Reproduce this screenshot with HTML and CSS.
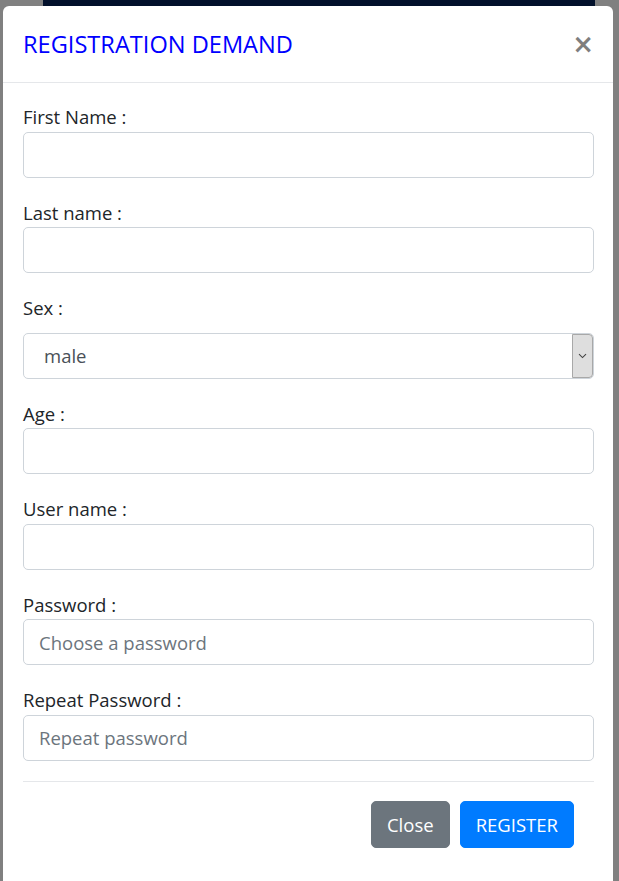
FILE: index.html
```html
<!DOCTYPE html>
<html lang="en">
<head>
<meta charset="utf-8">
<title>Registration demand</title>
<link rel="stylesheet" href="styles.css">
</head>
<body>
<div class="page">
  <div class="topbar"></div>
  <div class="modal">
    <div class="modal-header">
      <h5 class="modal-title">REGISTRATION DEMAND</h5>
      <button type="button" class="close" aria-label="Close">&times;</button>
    </div>
    <div class="modal-body">
      <form class="form">
        <div class="group">
          <label class="label">First Name :</label>
          <input class="control" type="text">
        </div>
        <div class="group">
          <label class="label">Last name :</label>
          <input class="control" type="text">
        </div>
        <div class="group">
          <label class="label label-spaced">Sex :</label>
          <div class="select-wrap">
            <select class="control select">
              <option>male</option>
              <option>female</option>
            </select>
            <span class="select-arrow">
              <svg width="9" height="6" viewBox="0 0 9 6"><path d="M1 1.2 L4.5 4.6 L8 1.2" fill="none" stroke="#444" stroke-width="1.1"/></svg>
            </span>
          </div>
        </div>
        <div class="group">
          <label class="label">Age :</label>
          <input class="control" type="text">
        </div>
        <div class="group">
          <label class="label">User name :</label>
          <input class="control" type="text">
        </div>
        <div class="group">
          <label class="label">Password :</label>
          <input class="control" type="password" placeholder="Choose a password">
        </div>
        <div class="group">
          <label class="label">Repeat Password :</label>
          <input class="control" type="password" placeholder="Repeat password">
        </div>
        <div class="modal-footer">
          <button type="button" class="btn btn-secondary">Close</button>
          <button type="button" class="btn btn-primary">REGISTER</button>
        </div>
      </form>
    </div>
  </div>
</div>
</body>
</html>
```
FILE: styles.css
```css
* { box-sizing: border-box; }

html, body {
  margin: 0;
  height: 881px;
  overflow: hidden;
}

body {
  background: #808080;
  font-family: "Open Sans", "Noto Sans", sans-serif;
  color: #212529;
}

.page {
  padding: 0 6px 0 3px;
}

.topbar {
  height: 6px;
  margin: 0 18px 0 40px;
  background: #02102b;
}

.modal {
  background: #fff;
  border-radius: 6px 6px 0 0;
  height: 875px;
}

.modal-header {
  display: flex;
  align-items: center;
  justify-content: space-between;
  padding: 19px 20px;
  border-bottom: 1px solid #e5e7ea;
}

.modal-title {
  margin: 0;
  font-size: 23.6px;
  font-weight: 400;
  line-height: 38px;
  color: #0000ff;
}

.close {
  border: 0;
  background: transparent;
  padding: 0;
  margin-right: -1px;
  font-family: "DejaVu Sans", sans-serif;
  font-size: 26px;
  font-weight: 700;
  line-height: 1;
  color: #000;
  opacity: .5;
  cursor: pointer;
}

.modal-body {
  padding: 19px 19px 20px 20px;
}

.group {
  margin-bottom: 20px;
}

.label {
  display: block;
  font-size: 18.5px;
  line-height: 29.5px;
}

.label-spaced {
  margin-bottom: 10px;
}

.control {
  display: block;
  width: 100%;
  height: 46px;
  margin: 0;
  padding: 0 15px;
  border: 1px solid #ced4da;
  border-radius: 5px;
  background: #fff;
  font-family: inherit;
  font-size: 18.5px;
  color: #495057;
}

.control::placeholder {
  color: #6c757d;
}

.select-wrap {
  position: relative;
}

.select {
  appearance: none;
  -webkit-appearance: none;
  padding-left: 20px;
}

.select-arrow {
  position: absolute;
  top: 1px;
  right: 1px;
  bottom: 1px;
  width: 21px;
  display: flex;
  align-items: center;
  justify-content: center;
  background: #dedede;
  border: 1px solid #a8a8a8;
  border-radius: 0 4px 4px 0;
  pointer-events: none;
}

.modal-footer {
  display: flex;
  justify-content: flex-end;
  padding: 14px 15px 15px;
  border-top: 1px solid #e5e7ea;
}

.btn {
  margin: 5px;
  height: 47px;
  padding: 0 15px;
  border: 1px solid transparent;
  border-radius: 5px;
  font-family: inherit;
  font-size: 18.5px;
  color: #fff;
  cursor: pointer;
}

.btn-secondary {
  background: #6c757d;
  border-color: #6c757d;
}

.btn-primary {
  background: #007bff;
  border-color: #007bff;
}
```
